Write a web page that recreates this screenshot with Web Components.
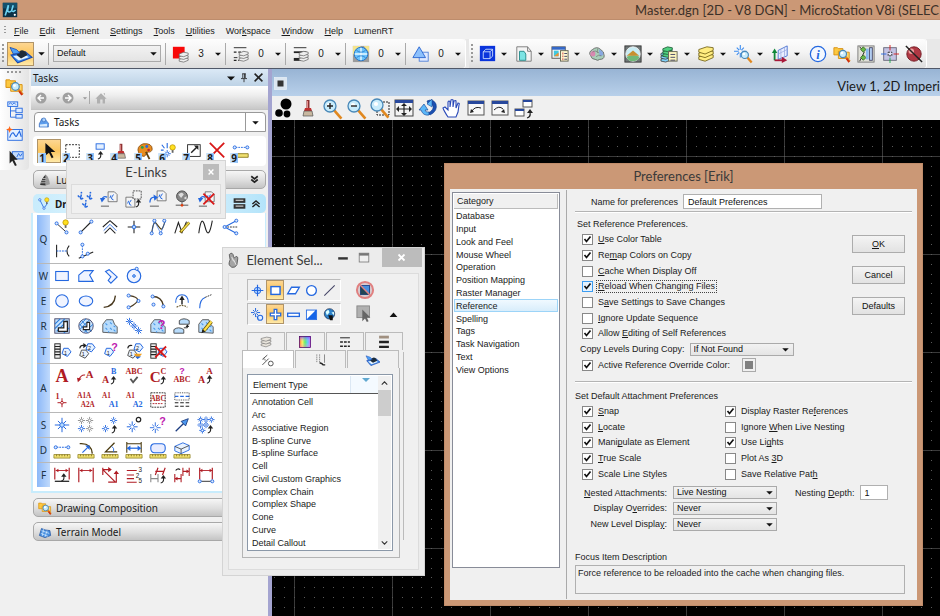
<!DOCTYPE html>
<html lang="en">
<head>
<meta charset="utf-8">
<title>MicroStation V8i</title>
<style>
html,body{height:100%}
body{margin:0;overflow:hidden;background:#f0f0f0;color:#1a1a1a;font:9px/12px "Liberation Sans",Arial,sans-serif}
</style>
</head>
<body>
<cad-app></cad-app>
<script>
/* ---------- icon drawing helpers (20 x 20 canvas) ---------- */
const B='#2468e0',K='#222',R='#b01c24',G='#8a8a8a';
const L=(c,d,w=1,x='')=>`<path d="${d}" fill="none" stroke="${c}" stroke-width="${w}" ${x}/>`;
const F=(c,d,s='none',w=1)=>`<path d="${d}" fill="${c}" stroke="${s}" stroke-width="${w}"/>`;
const C=(x,y,r,s,f='none',w=1)=>`<circle cx="${x}" cy="${y}" r="${r}" stroke="${s}" fill="${f}" stroke-width="${w}"/>`;
const Q=(x,y,w,h,s,f='none',k=1,e='')=>`<rect x="${x}" y="${y}" width="${w}" height="${h}" stroke="${s}" fill="${f}" stroke-width="${k}" ${e}/>`;
const T=(x,y,t,z,c,f='Liberation Serif')=>`<text x="${x}" y="${y}" font-family="${f},serif" font-weight="bold" font-size="${z}" fill="${c}" text-anchor="middle">${t}</text>`;
const star=(x,y,r,c=B,w=1)=>{let d='';for(let i=0;i<8;i++){const a=i*Math.PI/4,k=i%2?r*.8:r;d+=`M${x+Math.cos(a)*r*.25} ${y+Math.sin(a)*r*.25}L${x+Math.cos(a)*k} ${y+Math.sin(a)*k}`}return L(c,d,w)};
const stack=(x,y,c='#eee',s='#666')=>[6,3,0].map(k=>F(c,`M${x} ${y+k+2}l5-2 5 1v2l-5 2-5-1z`,s,.8)).join('');
const mag=(x,y,r=4)=>L('#e08820',`M${x+r*.6} ${y+r*.6}L${x+r*1.9} ${y+r*2.1}`,2.6)+C(x,y,r,'#4888b8','#c8ecfc',1.3)+C(x-1,y-1,r*.35,'none','#fff');
const folders=F('#fcc840','M1 3h4l1 1h5v7H1z','#d89010')+F('#ffd868','M6 7h4l1 1h7v7H6z','#d89010');
const hook=(x,y)=>L(K,`M${x} ${y+8}q4-1 3-6`,1.2)+F(K,`M${x} ${y+3}l3-4 3 4z`);
const bulb=(x,y)=>C(x,y,3,'#b89000','#ffe020',.8)+Q(x-1,y+3,2,3,'none','#666');
const brush=(x,y)=>L('#8c3030',`M${x} ${y-9}v8`,3)+L('#e89090',`M${x-.5} ${y-8}v7`)+F('#c03030',`M${x-3} ${y-1}h6l1 3h-8z`)+F('#c8b8a0',`M${x-4} ${y+2}h8l1 5h-10z`,'#555',.7);
const pencil=L('#6a5400','M7 16L16 5',4)+L('#ffe04a','M8 15L16 5',2.4)+F(K,'M5 18l1-4 3 2z');
const xdel=(x,y,r)=>L('#d81818',`M${x-r} ${y-r}L${x+r} ${y+r}M${x+r} ${y-r}L${x-r} ${y+r}`,2);
const node=(x,y)=>C(x,y,1.7,B,'#dcebff',1);
const ruler=F('#f0e070','M1 15h18v4H1z','#8c7c20',.8)+L('#6c5c10','M4 15v2M7 15v2M10 15v2M13 15v2M16 15v2',.8);
const hatch=(d)=>F('#b8dcfc',d,'#444',.9)+L('#4898e8','M5 7l2 2M10 6l2 2M5 12l2 2M10 12l2 2M14 14l2 2M8 16l1 1M14 10l2 1',1.2);
const blob='M2 17V8l4-5h7l2 5 3 3v7z';
const win=Q(2,3,16,14,'#555','#f8f8f8')+Q(2,3,16,3,'none','#28489c');
const docu=(x,y)=>F('#f4f4f4',`M${x} ${y}h7l3 3v8h-10z`,'#666',.9)+L(B,`M${x+6} ${y+3}l-2 3v2l2 1M${x+3} ${y+4}l-1 3`,1.1);
const dimA=(x,y,w)=>L(R,`M${x} ${y}H${x+w}`)+F(R,`M${x} ${y}l3-2v4zM${x+w} ${y}l-3-2v4z`);
const badge=(x,y,t,c=B)=>F('#e8f2ff',`M${x} ${y-5}h5l3 4-4 5-6-3z`,c,1.1)+`<text x="${x+2}" y="${y+2}" font-size="6" text-anchor="middle" font-family="Liberation Sans,sans-serif" fill="${K}">${t}</text>`;
const link=(x,y)=>C(x+1,y-6,1,'none',B)+L(B,`M${x-3} ${y-3}l2 2M${x+1} ${y-4}l-1 4q0 2 3 0`,1.6);
const glass=F('#3c8ef0','M1 11l13-3 6 5-13 5z','#1848b0')+F('#e8f4ff','M3 12l10-2 4 3-9 3z')+F('#1d2b3a','M6 11q4-7 8-3l2 3-6 3z')+F('#4ca0f8','M0 4l6 2 3 3-6 1z','#1848b0',.7);

const ICONS={
 logo:Q(1,1,18,18,'none','#0b3146')+Q(1,1,18,7,'none','#14506c')+L('#6fd4f4','M4 17L8 4M8 4L7 11q2 3 5 0l2-7M13 11q1 2 4-1',2)+C(16,16,1.4,'none','#fff'),
 glass,
 colorlev:Q(1,2,13,13,'none','#f80808')+stack(8,8),
 linestyle:L(K,'M2 3h14M2 14h4')+L(K,'M2 8h12M2 17h6',1.4,'stroke-dasharray="3 2"')+stack(8,7),
 weight:L(K,'M2 3h14')+L(K,'M2 8h14',2)+L(K,'M2 16h8',3.2)+stack(8,7),
 globe:Q(1,1,18,18,'none','#9c9c9c')+F('#f4e48c','M1 1h9L1 11zM19 1v7l-6-7z')+C(10,10,7.5,'#1c6cc4','#6cc4fc')+L('#e8f8ff','M10 3v14M3 10h14',1.6)+L('#1c6cc4','M5 6q5 4 10 0M5 14q5-4 10 0',.8),
 prio:Q(8,8,10,10,'#5080d8','#dfe9ff')+F('#8cc0fc','M8 2L1 14h14z','#2864d0'),
 cube:Q(1,1,18,18,'none','#0a34dc')+L('#d4e4ff','M5 8h8v8H5zM5 8l3-3h8v8l-3 3M13 8l3-3',1),
 page:F('#f4f4f4','M2 2h12l4 5v11H2z','#777')+F('#7ce4e4','M5 7h5l2 3v7H5z','#288')+L('#777','M14 2v5h4'),
 models:Q(1,3,14,12,'#555','#f6f6f6')+Q(1,3,14,3,'none','#3468c8')+Q(3,7,5,6,'none','#40c8e0')+F('#f09030','M3 13l5-4v4z')+Q(10,7,8,11,'#665','#fff8d0')+L('#c44','M12 10h1M12 13h1M12 16h1',2)+L('#446','M14 10h3M14 13h3M14 16h3'),
 brain:F('#a8d0b8','M3 12q-3-4 2-7 5-4 9 0 4 2 4 7 0 4-5 4-2 2-5 0-4 0-5-4z','#666')+F('#d888b0','M3 12q-2-4 3-6 3 2 2 5t-5 1z')+F('#88a8e0','M12 5q5 1 5 6l-4 2z')+L('#777','M5 8q4-3 6 1M9 13q3-3 6-1M11 4q-2 3 1 5',.8),
 raster:Q(1,1,18,18,'#333','#707878')+C(10,10,8,'#eee','#c8ecf4')+F('#70b878','M3 13q8-3 14 0 0 4-7 5-6 0-7-5z')+F('#c89030','M3 12l7-6 7 6z'),
 refs:stack(1,8,'#80d0f8','#333')+stack(3,3,'#50d080','#185030')+Q(9,8,9,10,'#665','#fff8c0')+L('#446','M11 11h5M11 14h5M11 17h5'),
 levels:[9,5,1].map(k=>F('#ffec80',`M2 ${k+4}l9-3 7 1v3l-9 4-7-2z`,'#6a5a10',.9)).join(''),
 snap:star(7,7,7,'#3c8cf0',1.2)+mag(12,11,4),
 axes:F('#e8eeff','M8 6l10-5v11L8 16z','#4870d0')+L('#98a8e0','M11 5v10M15 3v10M8 10l10-5',.8)+L('#108838','M4 17V8',2)+F('#108838','M1 9l3-5 3 5z')+L('#a81838','M4 17h9',2)+F('#a81838','M12 13l6 4-6 3z'),
 info:C(10,10,8.5,B,'#f4f8ff',1.4)+`<text x="10" y="15" font-size="14" font-style="italic" font-weight="bold" font-family="Liberation Serif,serif" text-anchor="middle" fill="${B}">i</text>`,
 foldermag:folders+mag(11,10,4)+L('#d03010','M15 15l3 4',2),
 toggles:Q(1,1,18,18,'#777','#e0e0d8')+L(K,'M3 2l5 6-5 10')+F('#68b848','M4 5l3-3 3 3-3 3zM4 14l3-3 3 3-3 3z','#285818',.8)+Q(10,4,3,12,'none','#88b8f0')+Q(14,3,3,14,'#446','#b8d4f8'),
 cross:Q(3,3,14,14,'#667','#c4c4e4')+L('#d81818','M10 0v6M20 10h-6')+L('#18a848','M10 14v6')+L(B,'M0 10h6')+Q(8,8,4,4,'#222','#e8e8fc',1,'stroke-dasharray="2 1"'),
 nosphere:C(10,10,8,'#701820','#b03844')+C(7,7,3,'none','#f0a0a0')+L(K,'M1 1l18 18',1.6),
 tree:Q(2,1,11,5,B,'#dcebff')+L(B,'M3 4l2-2 2 2 2-2 2 2M5 6v12h6M5 11h6')+Q(11,8,7,5,B,'#dcebff')+Q(11,15,7,4,B,'#dcebff'),
 curvenew:Q(2,5,16,12,B,'#e4f0ff')+L(B,'M4 14q3-8 5-4t3 2 3-5l2 6',1.3)+F('#ff6818','M4 1l1 3 3 1-3 1-1 3-1-3-3-1 3-1z'),
 pick:Q(7,3,12,8,B,'#c4dcfc')+L(B,'M12 9l2-4 2 3 2-3')+F(K,'M4 2v14l3-3 3 6 2-1-3-6h4z'),
 back:C(10,10,5.5,'none','#a0a0a0')+L('#fff','M13 10H7M10 7l-3 3 3 3',1.4),
 fwd:C(10,10,5.5,'none','#a0a0a0')+L('#fff','M7 10h6M10 7l3 3-3 3',1.4),
 home:F('#b0b0b0','M3 11l7-7 7 7h-2v6h-3v-5H9v5H5v-6zM13 4h2v3z'),
 taskbox:F('#5c9cec','M2 12l4-8 5 1 5 6v6L2 17z','#3468b8')+F('#d8ecff','M3 13l11-1v4H3z')+C(9,6,3,'#3468b8','#a8d0fc'),
 pin:L(K,'M7 3h6M8 3v7M12 3v7M11 3v7M5 11h10M10 11v6',1.4),
 wclose:L(K,'M4 4l12 12M16 4L4 16',2.4),
 arrow:F('#111','M6 1v14l4-3 3 6 2-1-3-6h5z'),
 fence:Q(2,3,15,14,K,'none',1.1,'stroke-dasharray="2 1.5"'),
 copyref:Q(9,2,9,6,B,'#e4f0ff')+hook(11,11),
 brush:brush(10,11),
 palette:F('#e88c20','M3 12q-3-7 5-10 10-1 10 6-1 4-5 3-2 4-4 5-4 0-6-4z','#8c5010')+C(7,6,1.6,'none','#28a048')+C(12,5,1.6,'none',B)+C(14,9,1.4,'none','#c02828')+L('#604010','M11 11l4 8',2),
 sparkbulb:L(B,'M2 3l3 4M8 1v6M4 9h-3',1.2)+bulb(14,6)+star(8,13,4,B),
 resize:Q(4,3,14,13,K)+L(K,'M8 12l7-7',1.6)+F(K,'M11 4h5v5z'),
 delx:xdel(10,9,8),
 measure:L(B,'M4 6h12',1,'stroke-dasharray="2 1"')+node(3,6)+node(17,6)+F('#f0e070','M5 13h13v4H5z','#8c7c20'),
 lumen:F('#333','M3 17Q5 8 11 2v16z')+F('#999','M11 2q5 4 6 14l-6 2z')+L('#eee','M5 11h6M4 14h7M7 8h4'),
 draw:L(B,'M4 4l6 12 5-7',1.2)+node(4,4)+node(10,16)+bulb(14,4),
 terrain:F('#4890e0','M2 15l3-10 5 2 7 1 1 7-8 3z','#1c50a0')+L('#d8ecff','M5 8l11 4M4 12l10 4M8 6l-2 10M13 8l-3 9'),
 chev:L(K,'M5 5l5 4 5-4M5 10l5 4 5-4',2.6),chevup:L(K,'M4 10l6-5 6 5M4 15l6-5 6 5',2.4),
 listb:Q(1,2,18,7,'none','#333')+Q(1,11,18,7,'none','#333')+L('#fff','M4 5h12M4 14h12',1.4),
 elinks:link(5,9)+link(15,9)+link(10,18),
 el2:docu(9,2)+L(B,'M2 11q1-5 6-3',1.4)+F(B,'M0 9h6l-4 5z')+L(G,'M1 18h9',1.6),
 el3:docu(1,8)+Q(9,1,9,9,'#444','#f4f4f4',1,'stroke-dasharray="2 1"')+hook(12,11),
 el4:docu(9,1)+L(B,'M1 14q0-6 5-6',1.4)+F(B,'M5 5l5 3-4 4z')+L(G,'M1 18h10',1.6),
 el5:C(10,7,6,'#444','#888')+F('#ddd','M6 5q4-4 6 0l-3 4zM12 9l3-2v4z')+L(G,'M10 13v3M3 17h14',1.6)+C(10,17,1.5,'none','#e04010'),
 el6:docu(8,2)+L(B,'M2 11q1-5 6-3',1.4)+F(B,'M0 9h6l-4 5z')+L(G,'M1 18h9',1.6)+xdel(12,10,6),
 q1:L(K,'M4 6l10 9')+node(4,6)+node(15,16)+bulb(14,5),
 q2:L(K,'M4 16L15 5',1.2)+node(4,16)+node(16,4),
 q3:L(K,'M2 10l8-7 8 7',1.2)+L(B,'M3 14l7-7 7 7')+L(K,'M4 17l6-6 6 6',1.2),
 q4:L(K,'M10 3v14M3 10h14',1.2)+C(10,10,2,B,'#b8d8ff'),
 q5:L('#4a3a10','M3 17Q5 2 8 6t5 6 5-9',1.2)+L(B,'M3 17L6 3l7 14 5-13',.7)+node(3,17)+node(6,3)+node(13,17)+node(17,3),
 q6:L(K,'M2 17L6 5l4 11 5-12',1.2)+L('#7a6000','M8 16l10-11',3)+L('#f4e050','M9 15l9-10',1.6),
 q7:L(K,'M2 17Q5-6 9 10t8-7',1.2),
 q8:L(B,'M17 3L4 10l13 7',1.2)+L(K,'M7 10h11',1,'stroke-dasharray="2 1"')+node(4,10)+node(17,3)+node(17,17),
 q9:L(K,'M4 3v14M18 4q-5 6 0 12',1.2)+L(B,'M4 10h11',1.2,'stroke-dasharray="2 1"'),
 q10:L(K,'M2 18L18 11',1.2)+L(B,'M6 4v12',1,'stroke-dasharray="2 1"')+node(6,3)+node(6,16)+node(12,13),
 w1:Q(3,5,14,10,B,'#f0f4ff',1.2),
 w2:F('#f0f4ff','M2 9l6-5h10l-4 5 4 7H2z',B,1.2),
 w3:F('#f0f4ff','M5 5l4-2 9 8-7 7-3-3 3-4-3-3z',B,1.2),
 w4:C(10,10,7.5,B,'#f0f4ff',1.3)+C(10,10,1.5,B,'#9cf')+node(13,2),
 e1:C(10,10,7,B,'#f0f4ff',1.2),
 e2:`<ellipse cx="10" cy="10" rx="7.5" ry="5.5" fill="#f0f4ff" stroke="${B}" stroke-width="1.2"/>`,
 e3:L('#4a3a20','M3 17Q15 16 16 4',1.5),
 e4:L('#4a3a20','M5 4q18 3 0 13',1.3)+node(4,4)+node(15,10)+node(4,17),
 e5:L('#4a3a20','M4 5q10 0 12 10',1.5)+node(4,5)+node(16,16)+node(5,14),
 e6:L(B,'M3 12q0-9 7-9t7 9',1.2)+L(K,'M10 7v7',1.6)+F(K,'M7 9l3-5 3 5z')+L('#6a5a30','M4 17q6-4 12 0',1.2,'stroke-dasharray="2 1"'),
 e7:L(B,'M3 18Q3 8 9 6',1.2)+L(K,'M9 6l7-3',1,'stroke-dasharray="2 1"'),
 r1:Q(2,2,16,16,'#446','#c8e4ff')+L('#2c7cd8','M2 8l6-6M2 13L13 2M4 16L16 4M12 18l6-6',1.3)+F('#fff','M12 5h4v11H6v-4h6z',K,1.4),
 r2:C(10,10,8,'#446','#c8e4ff')+L('#2c7cd8','M3 9l7-7M3 14L14 3M8 17l10-9M5 4l11 12M3 8l9 10',1.1)+F('#fff','M11 6h3v8H7v-3h4z',K,1.2),
 r3:hatch(blob),r4:star(5,5,4)+star(10,10,4)+star(15,15,4)+L(B,'M2 2l16 16'),
 r5:hatch(blob)+T(14,13,'?',14,'#c020b0','Liberation Sans'),
 r6:F('#b8dcfc','M7 8V4q5-4 11 0v4z','#444')+F('#b8dcfc','M1 18v-4q5-4 11 0v4z','#444')+L(K,'M12 12h4V9')+F(K,'M14 11l2-3 2 3z'),
 r7:hatch(blob)+pencil,
 t1:Q(2,2,6,16,K,'#eee')+L(K,'M2 5h6M2 8h6M2 11h6M2 14h6',1.3)+badge(12,12,'1'),
 t2:badge(12,7,'2')+badge(5,14,'1','#555')+L(K,'M3 7q1-4 5-3',1.2)+F(K,'M7 1l4 3-4 3z'),
 t3:badge(6,12,'1')+T(15,10,'?',12,'#c020b0','Liberation Sans'),
 t4:badge(12,7,'2')+badge(5,14,'1','#555')+F('#f0a020','M10 13h9l-5 6z')+F(B,'M11 16h7l-4 3z')+L(K,'M3 7q1-4 5-3',1.2),
 t5:Q(2,2,6,16,K,'#eee')+L(K,'M2 5h6M2 8h6M2 11h6M2 14h6',1.3)+badge(12,12,'1')+xdel(13,11,6),
 a1:T(10,17,'A',20,R),
 a2:T(14,12,'A',12,R)+L(R,'M2 14q3-6 7-5',1.2)+F(R,'M0 12l5 1-4 4z'),
 a3:T(5,18,'A',11,R)+T(14,8,'B',9,B)+hook(11,11),
 a4:T(10,8,'ABC',9,R)+L('#555','M6 13l3 4 5-6',2),
 a5:T(7,17,'C',17,R)+T(16,8,'C',9,R)+hook(13,11),
 a6:T(10,8,'?',10,'#c020b0','Liberation Sans')+T(10,17,'ABC',9,R),
 a7:T(5,18,'A',11,R)+T(14,8,'A',10,R)+hook(11,10),
 a8:T(5,9,'1',9,R)+L(R,'M10 8v10M5 13h10',1.1)+C(10,13,1.5,R,'#fff'),
 a9:T(8,8,'A1A',8,R)+T(12,18,'A2A',8,R),
 a10:T(6,8,'A1',8,R)+T(14,18,'A1',9,B),
 a11:T(6,8,'A1',8,R)+T(14,18,'A2',9,B),
 a12:Q(2,2,16,16,K,'none',1,'stroke-dasharray="2 1"')+T(10,11,'ABC',8,R)+L(R,'M4 14h12',1,'stroke-dasharray="2 1"'),
 a13:L(B,'M2 6h16',1.2,'stroke-dasharray="4 2"')+Q(2,2,16,8,K,'none',.9,'stroke-dasharray="1 1"')+L(K,'M2 13h16M2 17h16',1.2,'stroke-dasharray="4 2"'),
 s1:star(10,10,8,B,1.1)+C(10,10,2.5,B,'#b8dcff'),
 s2:star(5,5,4,G)+star(14,5,4,G)+star(5,14,4,B)+star(14,14,4,G),
 s3:star(14,5,4)+star(5,14,4)+hook(12,11),
 s4:star(8,12,6,B,1.1)+C(15,4,2.5,K,'#fff',1.3),
 s5:star(7,13,6)+T(15,10,'?',12,'#c020b0','Liberation Sans'),
 s6:L('#1c3c80','M3 17l9-9',1.4)+F('#4c98f0','M9 6l8-3-3 8z','#1c3c80'),
 s7:star(4,4,3.5)+star(10,4,3.5)+star(16,4,3.5)+star(4,10,3.5)+star(10,10,3.5)+star(6,16,3.5)+hook(12,11),
 d1:L(B,'M4 7h12',1.2,'stroke-dasharray="2 1"')+node(3,7)+node(17,7)+ruler,
 d2:L('#4a3a10','M3 3q13-1 14 11',1.5)+L(B,'M6 13l6-6',1.3)+F(B,'M9 5h5v5z')+ruler,
 d3:L('#4a3a10','M15 2L5 12h13',1.4)+L(B,'M12 6q3 2 2 6')+ruler,
 d4:L('#4a3a10','M2 1v12M18 1v12M2 3h16',1.2)+L(B,'M3 8h14',1.4)+F(B,'M2 8l4-3v6zM18 8l-4-3v6z')+ruler,
 d5:Q(2,3,16,10,B,'#e8ecff',1.2,'rx="4"')+ruler,
 d6:F('#e8f2ff','M2 6l9-4 7 3v5l-9 4-7-3z',B)+L(K,'M2 6l7 3 9-4M9 9v5',.8)+ruler,
 f1:L(R,'M2 2v13M18 2v13',1.3)+dimA(3,5,14)+hook(9,9)+L(K,'M2 17h16',1.4),
 f2:L(R,'M2 2v16M18 2v16',1.3)+dimA(3,5,14),
 f3:L(R,'M2 2v8M2 4h9M2 4l14 14M17 8v10h-9',1.3)+F(R,'M8 1l4 3-4 3zM14 9l3-4 3 4z'),
 f4:L(R,'M2 5h11M2 10h8M2 14h8M2 18h11',1.2)+`<g font-family="Liberation Sans,sans-serif" font-size="7" fill="${K}"><text x="15" y="7">3</text><text x="12" y="13">2</text><text x="15" y="19">5</text></g>`,
 f5:L(G,'M2 9v9M10 9v9M2 14h8',1.2)+L(R,'M7 6h10M10 2l-3 8M18 2l-3 8',1.3)+hook(13,11),
 f6:L(R,'M2 9v9M9 9v9M11 2v9M18 2v9M2 14h7M11 6h7',1.2)+L(K,'M3 5q2-3 5-1',1.2)+F(R,'M2 14l3-2v4zM18 6l-3-2v4z'),
 f7:L(R,'M3 2v13M17 2v13',1.3)+dimA(3,5,14)+L(K,'M4 17h12')+node(3,17)+node(17,17),
 blobs:C(12,6,5.5,'none','#000')+C(5,15,3.8,'none','#000')+C(13,16,3.4,'none','#000'),
 zin:mag(8,8,6)+L(K,'M8 5v6M5 8h6',1.4),zout:mag(8,8,6)+L(K,'M5 8h6',1.4),
 zarea:Q(7,4,12,13,K,'none',1,'stroke-dasharray="2 1"')+mag(7,7,6),
 fit:Q(1,2,18,16,'#444','#f4f4f4')+Q(1,2,18,3,'none','#28489c')+L(K,'M10 6v11M3 11h14',1.2)+F(K,'M10 5l-3 3h6zM10 18l-3-3h6zM2 11l3-3v6zM18 11l-3-3v6z'),
 rotate:F('#1c50b0','M9 3q6-3 9 3 2 7-6 11l-2-2q6-3 5-7-2-3-5-2z','#0c3c90',.6)+F('#5cb8f8','M11 17q-6 1-8-5H1l5-6 4 6H7q1 3 4 2z','#0c3c90',.6)+F('#5cb8f8','M9 6l5-5v8z','#0c3c90',.5),
 hand:F('#fff','M6 19q-4-6-5-9l2-1 3 3V4q1-2 2 0v5l1-7q1-1 2 0v7l1-6q2-1 2 0v7l2-5q2 0 1 2l-1 7-2 5z','#2848b8',1.1),
 prev:win+L(K,'M6 13q3-5 9-3')+F(K,'M4 15l1-4 3 3z'),
 next:win+L(K,'M4 12q5-5 9-1')+F(K,'M15 15l-1-4-3 3z'),
 vcopy:Q(9,2,9,7,'#555','#fff')+Q(9,2,9,2,'none','#28489c')+Q(1,11,9,7,'#555','#fff')+Q(1,11,9,2,'none','#28489c')+hook(13,12),
 doc:Q(2,2,16,16,'#e8f0f8','#dce6f0')+Q(6,6,8,8,'none','#333'),
 wrench:F('#a4a4a4','M5 3q4-4 5 2l1 2q4-4 4 1l-1 7q-2 4-6 3-5-3-3-6l1-3z','#555')+L('#eee','M8 6l2 5M10 9l3 6'),
 p1:C(10,10,5,B,'#b8d8ff',1.4)+L(B,'M10 1v18M1 10h18',1.8),p2:Q(3,4,14,12,B,'#fff',2.2),
 p3:F('#fff','M7 5h12l-6 10H1z',B,2),p4:C(10,10,7.5,B,'#fff',2),p5:L('#446','M2 18L18 2',1.6),
 p6:star(7,7,7,B,1.5)+C(14,15,4,B,'#e4f0ff',1.6)+L(B,'M8 13l4 3'),
 p7:F('#fff','M8 2h4v6h6v4h-6v6H8v-6H2V8h6z',B,2),p8:Q(1,8,18,5,B,'#fff',2),
 p9:Q(2,3,16,15,B,'#1464e8')+F('#fff','M3 4h13L3 17z'),
 p10:C(10,9,8,'#124','#2c80c8')+F('#dff','M4 6q5-6 6 1l-4 4zM13 7l4-1v5z')+F('#111','M8 11h7v8h-4z'),
 no:C(10,10,9,'#e08080','#d8ccd0',2.2)+Q(5,5,10,10,'#248','#4890e0')+F('#245','M5 5l10 10H5z')+L('#e08080','M4 4l12 12',1.6),
 gcur:Q(1,1,14,13,'#888','#b0b0b0')+F('#666','M7 5v13l3-3 2 4 2-1-2-4h4z'),
 tl:[10,6,2].map(k=>F('#e8e4dc',`M3 ${k+3}l8-2 6 1v2l-7 3-7-2z`,'#666',.8)).join(''),
 hue:`<defs><linearGradient id="h"><stop offset="0" stop-color="#f40"/><stop offset=".25" stop-color="#fe3"/><stop offset=".5" stop-color="#3e4"/><stop offset=".75" stop-color="#3bf"/><stop offset="1" stop-color="#d3f"/></linearGradient><linearGradient id="v" x2="0" y2="1"><stop offset="0" stop-color="#74f" stop-opacity=".8"/><stop offset=".5" stop-color="#fff" stop-opacity=".2"/><stop offset="1" stop-color="#f8c" stop-opacity=".6"/></linearGradient></defs><rect x="2" y="2" width="16" height="16" fill="url(#h)"/><rect x="2" y="2" width="16" height="16" fill="url(#v)" stroke="#406"/>`,
 tdash:L(K,'M3 4h14',1.4)+L(K,'M3 10h14M3 16h14',2,'stroke-dasharray="4 1.5"'),
 tthick:Q(3,1,14,4,'none','#a09080')+L(K,'M3 10h14M3 17h14',3.4),
 telem:L('#555','M2 9l7-6M2 17l9-9',1.4)+L('#555','M3 9q3-2 3 2')+C(14,15,3.4,'#555','#fff',1.4),
 tu:L(G,'M4 2v11M8 2v11',1.4,'stroke-dasharray="2 1"')+L(G,'M15 2v12',1.4)+L(K,'M8 14q4 1 5 3h3',2),
 caret:F('#111','M5 8h10l-5 5z'),caretS:F('#999','M7 9h6l-3 3z'),tri:F('#111','M4 14h12l-6-7z'),
 min:Q(4,9,12,3,'none','#333'),max:Q(4,4,12,11,'#777','#f0f0f0')+Q(4,4,12,3,'none','#777'),
 cx:L('#fff','M6 6l8 8M14 6l-8 8',2.4),sup:L('#333','M5 12l5-5 5 5',2),sdn:L('#333','M5 8l5 5 5-5',2)
};

const def=(name,html)=>customElements.define(name,class extends HTMLElement{
  connectedCallback(){
    if(this.shadowRoot)return;
    this.attachShadow({mode:'open'}).innerHTML=typeof html==='function'?html(this):html;
  }});
const a=(e,n,d='')=>e.getAttribute(n)??d;
const btnReset='button{appearance:none;border:0;background:none;padding:0;margin:0;font:inherit;color:inherit;display:grid;place-items:center}';

def('ui-icon',e=>`<style>:host{display:inline-grid;place-items:center}svg{display:block;overflow:visible}</style>
<svg width="${a(e,'size',18)}" height="${a(e,'size',18)}" viewBox="0 0 20 20" aria-hidden="true">${ICONS[a(e,'name')]||''}</svg>`);

/* icon button; its cell size comes from --w and --h */
def('tool-button',e=>`<style>:host{display:block;position:relative;width:var(--w,24px);height:var(--h,24px)}${btnReset}
button{width:100%;height:100%;box-sizing:border-box}
:host([active]) button{background:linear-gradient(#fdd692,#fbc65e 50%,#ffe9a8);border:1px solid #b09468}
span{position:absolute;left:1px;bottom:0;width:8px;height:10px;background:linear-gradient(90deg,#d4e8fc,#8cc0f8);font:bold 10px/11px "Noto Sans",sans-serif;text-align:center}
</style><button aria-label="${a(e,'label',a(e,'icon'))}"><ui-icon name="${a(e,'icon')}" size="${a(e,'size',18)}"></ui-icon></button>${e.hasAttribute('key')?`<span>${a(e,'key')}</span>`:''}`);

def('tool-combo',e=>`<style>:host{display:flex;align-items:center;flex:var(--f,none)}${btnReset}
ui-icon{width:20px}b{font:10px/12px "Liberation Sans",sans-serif;width:${e.hasAttribute('value')?24:0}px;text-align:center}.c{width:14px;height:20px}.c ui-icon{width:14px}
:host([sep]){border-left:1px solid #aaa;padding-left:5px;height:22px}</style>
<button aria-label="${a(e,'icon')}"><ui-icon name="${a(e,'icon')}" size="${a(e,'size',18)}"></ui-icon></button><b>${a(e,'value')}</b><button class="c" aria-label="${a(e,'icon')} options"><ui-icon name="caret" size="12"></ui-icon></button>`);

def('app-title',`<style>:host{display:flex;align-items:center;justify-content:space-between;height:20px;padding:0 1px 0 2px;background:#cb9876;box-shadow:inset 0 -1px #bd8c6c;font:13px/18px Lato,sans-serif;color:#3c3028;white-space:nowrap}</style>
<ui-icon name="logo" size="16"></ui-icon><slot></slot>`);

def('app-menu',`<style>:host{display:flex;align-items:center;gap:1px;height:19px;padding-left:4px;background:#f0f0f0;font-size:9px}${btnReset}
button{padding:0 5px;height:18px;line-height:20px;display:block}i{width:2px;height:8px;margin-right:2px;background:repeating-linear-gradient(#999 0 1px,transparent 1px 3px)}</style><i></i>
<button><u>F</u>ile</button><button><u>E</u>dit</button><button>E<u>l</u>ement</button><button><u>S</u>ettings</button><button><u>T</u>ools</button><button><u>U</u>tilities</button><button>Wor<u>k</u>space</button><button><u>W</u>indow</button><button><u>H</u>elp</button><button>LumenRT</button>`);

def('ui-select',e=>`<style>:host{display:inline-grid;align-items:center}select,ui-icon{grid-area:1/1}
select{appearance:none;width:100%;height:var(--sh,13px);box-sizing:border-box;border:1px solid #aaa;border-radius:0;background:linear-gradient(#f2f2f2,#e4e4e4);font:9px/11px "Liberation Sans",sans-serif;color:#111;padding:0 3px;margin:0;outline:0}
ui-icon{justify-self:end;width:16px;pointer-events:none}</style>
<select aria-label="${a(e,'label')}"><option>${a(e,'value')}</option></select><ui-icon name="caret" size="13"></ui-icon>`);

const combos=[['page',18],['models',19],['brain',18],['raster',18],['refs',19],['levels',18],['snap',18],['axes',18]];
def('app-toolbars',`<style>:host{display:flex;gap:4px;height:29px;background:#e8e8e8;border-bottom:1px solid #505868;padding-right:14px}
.bar{display:flex;align-items:center;background:linear-gradient(#fdfdfd,#f4f4f4 45%,#dcdcdc);border-radius:0 3px 3px 0;box-shadow:1px 0 #fff}
.grip{width:2px;height:20px;margin:0 3px 0 2px;background:repeating-linear-gradient(#999 0 2px,transparent 2px 4px)}
.act{--w:27px;--h:24px}.second{flex:1}.second .grip{margin-right:4px}.tail{--w:24px;display:flex}
${btnReset}.c{width:14px;height:20px}
ui-select{width:108px;--sh:17px;margin:0 4px}.s{width:1px;height:22px;background:#aaa}.first tool-combo{width:60px;box-sizing:border-box}
</style>
<div class="bar first"><i class="grip"></i><tool-button class="act" icon="glass" size="22" active></tool-button><button class="c" aria-label="Templates"><ui-icon name="caret" size="13"></ui-icon></button><i class="s"></i>
<ui-select label="Active level" value="Default"></ui-select>
<tool-combo sep icon="colorlev" value="3"></tool-combo><tool-combo sep icon="linestyle" value="0"></tool-combo><tool-combo sep icon="weight" value="0"></tool-combo><tool-combo sep icon="globe" value="0"></tool-combo><tool-combo sep icon="prio" value="0"></tool-combo></div>
<div class="bar second"><i class="grip"></i><tool-combo style="--f:1" icon="cube" size="17"></tool-combo>${combos.map(c=>`<tool-combo style="--f:1" icon="${c[0]}" size="${c[1]}"></tool-combo>`).join('')}
<div class="tail">${['info','foldermag','toggles','cross','nosphere'].map(n=>`<tool-button icon="${n}"></tool-button>`).join('')}</div></div>`);

def('side-dock',`<style>:host{display:block;width:31px;background:#f0f0f0}
div{width:29px;height:101px;background:linear-gradient(90deg,#fff,#e4e4e4);border-radius:0 0 4px 0;display:flex;flex-direction:column;align-items:center;--w:29px;--h:24px}
i{width:16px;height:2px;margin:2px 0 1px;background:repeating-linear-gradient(90deg,#999 0 2px,transparent 2px 4px)}</style>
<div><i></i><tool-button icon="foldermag" size="19"></tool-button><tool-button icon="tree"></tool-button><tool-button icon="curvenew"></tool-button><tool-button icon="pick"></tool-button></div>`);

def('task-row',e=>`<style>:host{display:flex;border-bottom:1px solid #b8b8b8;min-height:24px}
span{width:13px;display:grid;place-items:center;background:linear-gradient(90deg,#8cb8f8,#c0dafc);font:10px/14px "Noto Sans",sans-serif;color:#234}
div{flex:1;display:grid;grid-template-columns:repeat(8,24px);grid-auto-rows:24px}</style>
<span>${a(e,'key')}</span><div>${a(e,'icons').split(' ').map(n=>n==='-'?'<i></i>':`<tool-button icon="${n}"></tool-button>`).join('')}</div>`);

def('task-bar',e=>`<style>:host{display:block;height:19px;box-sizing:border-box;border:1px solid #a8a8a8;border-radius:5px;background:linear-gradient(#f6f6f6,#dedede 55%,#c4c4c4)}
${btnReset}button{width:100%;height:100%;display:flex;align-items:center;padding:0 4px;gap:4px;font:10px/14px "Noto Sans",sans-serif;font-weight:${a(e,'weight','normal')}}
b{flex:1;text-align:left;font-weight:inherit}:host([open]){border:0;background:linear-gradient(90deg,#c8ecfc,#eaf8ff 50%,#b4e4fa)}</style>
<button><ui-icon name="${a(e,'icon')}" size="14"></ui-icon><b>${a(e,'text')}</b>${e.hasAttribute('open')?'<ui-icon name="listb" size="13"></ui-icon><ui-icon name="chevup" size="12"></ui-icon>':'<ui-icon name="chev" size="13"></ui-icon>'}</button>`);

def('task-pane',`<style>:host{display:flex;flex-direction:column;width:237px;background:#f0f0f0;border-right:4px solid #a4a4d0}
${btnReset}
header{display:flex;align-items:center;height:17px;padding:0 3px 0 2px;background:linear-gradient(#dbe9f6,#bed3e6);font:10px/14px "Noto Sans",sans-serif}header b{flex:1;font-weight:normal}header button{width:14px;height:16px}
nav{display:flex;align-items:center;height:23px;background:linear-gradient(#fff,#eee 40%,#c8c8c8);border-bottom:1px solid #c4c4c4}nav .d{width:7px}nav i{width:1px;height:13px;margin:0 3px 0 4px;background:#aaa}
.pick{display:flex;align-items:center;height:20px;margin:2px 2px 0 3px;background:#fff;border:1px solid #999;border-radius:4px 4px 0 0;font:10px/14px "Noto Sans",sans-serif;box-sizing:border-box}.pick ui-icon{width:18px}.pick button:last-child{margin-left:auto;border-left:1px solid #999;width:20px;height:18px}
.pick .n{display:flex;gap:1px}
.keys{display:flex;margin:4px 2px 0;padding:3px 4px;height:24px;background:#fff;border-radius:4px}
.body{margin:0 2px 5px 0;padding:2px 0 4px 4px;background:#fff;border:solid #c8ecfc;border-width:0 1px 2px 2px}
task-bar{margin:0 2px}task-bar.l{margin-top:4px}task-bar.o{margin-top:5px}task-bar.t{margin-top:5px}
task-row:last-child{border:0}</style>
<header><b>Tasks</b><button aria-label="Menu"><ui-icon name="caret" size="16"></ui-icon></button><button aria-label="Pin"><ui-icon name="pin" size="12"></ui-icon></button><button aria-label="Close"><ui-icon name="wclose" size="13"></ui-icon></button></header>
<nav><button aria-label="Back"><ui-icon name="back" size="20"></ui-icon></button><button class="d" aria-label="Back list"><ui-icon name="caretS" size="14"></ui-icon></button><button aria-label="Forward"><ui-icon name="fwd" size="20"></ui-icon></button><button class="d" aria-label="Forward list"><ui-icon name="caretS" size="14"></ui-icon></button><i></i><button aria-label="Home"><ui-icon name="home" size="16"></ui-icon></button></nav>
<div class="pick"><button class="n"><ui-icon name="taskbox" size="13"></ui-icon>Tasks</button><button aria-label="Choose task"><ui-icon name="caret" size="13"></ui-icon></button></div>
<div class="keys">${['arrow','fence','copyref','brush','palette','sparkbulb','resize','delx','measure'].map((n,i)=>`<tool-button icon="${n}" key="${i+1}" ${i?'':'active'}></tool-button>`).join('')}</div>
<task-bar class="l" icon="lumen" text="Lu"></task-bar>
<task-bar class="o" icon="draw" text="Dr" weight="bold" open></task-bar>
<div class="body">
<task-row key="Q" icons="q1 q2 q3 q4 q5 q6 q7 q8 q9 q10"></task-row><task-row key="W" icons="w1 w2 w3 w4"></task-row><task-row key="E" icons="e1 e2 e3 e4 e5 e6 e7"></task-row><task-row key="R" icons="r1 r2 r3 r4 r5 r6 r7"></task-row><task-row key="T" icons="t1 t2 t3 t4 t5"></task-row><task-row key="A" icons="a1 a2 a3 a4 a5 a6 a7 - a8 a9 a10 a11 a12 a13"></task-row><task-row key="S" icons="s1 s2 s3 s4 s5 s6 s7"></task-row><task-row key="D" icons="d1 d2 d3 d4 d5 d6"></task-row><task-row key="F" icons="f1 f2 f3 f4 f5 f6 f7"></task-row></div>
<task-bar icon="foldermag" text="Drawing Composition"></task-bar><task-bar class="t" icon="terrain" text="Terrain Model"></task-bar>`);

let dots='';for(let x=0;x<10;x++)for(let y=0;y<10;y++)dots+=`<rect x="${Math.round(x*9.8)}" y="${Math.round(y*9.8)}" width="1" height="1"/>`;
def('drawing-view',`<style>:host{display:flex;flex-direction:column;flex:1;min-width:0}
header{display:flex;justify-content:space-between;align-items:flex-start;height:27px;padding:0 0 0 1px;background:linear-gradient(#98b4d4,#b8d0ea);font:13px/18px Lato,sans-serif;white-space:nowrap;box-sizing:border-box}
header ui-icon{margin-top:7px}header span{margin-top:8px}
nav{display:flex;height:24px;background:#f0f0f0}
svg{flex:1;width:100%;min-height:0;background:#000;display:block}</style>
<header><ui-icon name="doc" size="15"></ui-icon><span>View 1, 2D Imperi</span></header>
<nav>${['blobs','brush','zin','zout','zarea','fit','rotate','hand','prev','next','vcopy'].map(n=>`<tool-button icon="${n}" size="20"></tool-button>`).join('')}</nav>
<svg aria-hidden="true"><defs><pattern id="g" x="22" y="36" width="98" height="98" patternUnits="userSpaceOnUse"><rect width="1" height="98" fill="#3a3a3a"/><rect width="98" height="1" fill="#3a3a3a"/><g fill="#5a5a5a">${dots}</g></pattern></defs><rect width="100%" height="100%" fill="url(#g)"/></svg>`);

/* floating window: slots for its lead icon, controls and content */
def('float-window',e=>`<style>:host{position:absolute;display:block;box-sizing:border-box;background:var(--frame,#ececec);box-shadow:inset 0 0 0 1px var(--edge,#d4d4d4);padding:0 var(--pad,6px) var(--pad,6px)}
header{display:flex;align-items:center;justify-content:center;height:var(--bar,26px);font:13px/18px Lato,sans-serif;color:#3a3a3a;white-space:nowrap}
section{background:#f0f0f0;border:1px solid var(--line,#dcdcdc)}</style>
<header><slot name="lead"></slot><span>${a(e,'caption')}</span><slot name="controls"></slot></header><section><slot></slot></section>`);

def('e-links',`<style>:host{display:block}float-window{left:66px;top:160px;width:160px;--pad:5px;--bar:24px}${btnReset}
.x{position:absolute;right:7px;top:4px;width:16px;height:16px;background:#bcbcbc}div{display:flex;padding:2px 1px;--w:24px;justify-content:space-around}</style>
<float-window caption="E-Links"><button class="x" slot="controls" aria-label="Close"><ui-icon name="cx" size="12"></ui-icon></button>
<div>${['elinks','el2','el3','el4','el5','el6'].map(n=>`<tool-button icon="${n}"></tool-button>`).join('')}</div></float-window>`);

const types=['Annotation Cell','Arc','Associative Region','B-spline Curve','B-spline Surface','Cell','Civil Custom Graphics','Complex Chain','Complex Shape','Cone','Curve','Detail Callout'];
def('element-selection',`<style>:host{display:block}float-window{left:222px;top:247px;width:203px}${btnReset}
.lead{display:contents}.lead ui-icon{margin-right:4px}
.ctl{display:flex;align-items:flex-start;height:24px;margin:0 0 0 10px}.ctl button{width:22px;height:20px;margin-left:-1px}.ctl button:last-child{width:40px;height:19px;background:#bcbcbc;margin-left:7px}
.in{padding:5px 18px 11px 13px}
.tools{display:grid;grid-template-columns:94px 1fr;gap:2px 8px;padding-left:5px;margin-right:-7px}
.g{display:flex;--w:18px;--h:20px;height:20px;border:1px solid #bbb;border-right-color:#fff;border-bottom-color:#fff}
.o{display:flex;align-items:center;justify-content:space-between;padding:0 7px}
.tabs{display:flex;position:relative}.tabs button{flex:1;height:18px;border:1px solid #bbb;border-bottom:0;background:#f0f0f0;margin-right:1px}
.back{margin:7px -4px 0 5px}.front button:first-child{background:#fff}
.pane{border:1px solid #b4b4b4;border-top:0;padding:6px 6px 6px 4px;box-shadow:4px -17px 0 -1px #f0f0f0,5px -17px 0 -1px #bbb;background:#f0f0f0}
.list{display:grid;grid-template-columns:1fr 13px;border:1px solid #8b98a8;background:#fff;padding:1px}
.h{margin-left:1px;height:17px;display:flex;align-items:center;padding-left:3px;border-bottom:1px solid #555;background:linear-gradient(90deg,#fff 100px,#dce8f4 100px 101px,#f4faff 101px)}
.h span{flex:1}.h i{align-self:start;margin:2px 8px;border:solid transparent;border-width:4px 4px 0;border-top-color:#60a8d0}
ul{list-style:none;margin:0;padding:2px 0 0 3px;height:153px;display:grid;grid-auto-rows:1fr;align-items:center}
.sb{grid-area:1/2/3/3;background:#f0f0f0;display:flex;flex-direction:column;justify-content:space-between}.sb button{height:14px}.sb i{height:26px;background:#cdcdcd;margin-bottom:auto}</style>
<float-window caption="Element Sel..."><span slot="lead" class="lead"><ui-icon name="wrench" size="17"></ui-icon></span>
<div slot="controls" class="ctl"><button aria-label="Minimize"><ui-icon name="min" size="16"></ui-icon></button><button aria-label="Maximize"><ui-icon name="max" size="16"></ui-icon></button><button aria-label="Close"><ui-icon name="cx" size="15"></ui-icon></button></div>
<div class="in"><div class="tools"><div class="g">${['p1','p2','p3','p4','p5'].map((n,i)=>`<tool-button icon="${n}" size="13" ${i===1?'active':''}></tool-button>`).join('')}</div><div class="o"><ui-icon name="no" size="18"></ui-icon></div>
<div class="g">${['p6','p7','p8','p9','p10'].map((n,i)=>`<tool-button icon="${n}" size="13" ${i===1?'active':''}></tool-button>`).join('')}</div><div class="o"><ui-icon name="gcur" size="18"></ui-icon><ui-icon name="tri" size="13"></ui-icon></div></div>
<div class="tabs back">${['tl','hue','tdash','tthick'].map(n=>`<button aria-label="${n}"><ui-icon name="${n}" size="14"></ui-icon></button>`).join('')}</div>
<div class="tabs front">${['telem','tu','glass'].map(n=>`<button aria-label="${n}"><ui-icon name="${n}" size="14"></ui-icon></button>`).join('')}</div>
<div class="pane"><div class="list"><div class="h"><span>Element Type</span><i></i></div><div class="sb"><button aria-label="Up"><ui-icon name="sup" size="11"></ui-icon></button><i></i><button aria-label="Down"><ui-icon name="sdn" size="11"></ui-icon></button></div><ul>${types.map(t=>`<li>${t}</li>`).join('')}</ul></div></div></div></float-window>`);

def('ui-check',e=>`<style>:host{display:flex;align-items:center}label{display:flex;align-items:center;gap:3px;white-space:nowrap}
input{appearance:none;width:11px;height:11px;margin:0;border:1px solid #888;background:#fff;box-sizing:border-box}
input:checked{background:#fff url("data:image/svg+xml,%3Csvg xmlns='http://www.w3.org/2000/svg' viewBox='0 0 18 18'%3E%3Cpath d='M3 8l4 5 8-10' fill='none' stroke='%23111' stroke-width='3.4'/%3E%3C/svg%3E") center/9px}
:host([focus]) input{border-color:#3c9cf0;background-color:#e4f2ff}span{padding:0 1px;border:1px solid transparent;line-height:11px}:host([focus]) span{border:1px dotted #444}</style>
<label><input type="checkbox" ${e.hasAttribute('on')?'checked':''}><span><slot></slot></span></label>`);

const cats=['Database','Input','Look and Feel','Mouse Wheel','Operation','Position Mapping','Raster Manager','Reference','Spelling','Tags','Task Navigation','Text','View Options'];
def('preferences-dialog',`<style>:host{display:block}float-window{left:444px;top:163px;width:479px;--frame:#cb9876;--edge:#c08c6a;--line:#f0f0f0;--bar:26px}
.cols{display:grid;grid-template-columns:116px 1fr}
aside{padding:2px 6px 31px 1px;border-right:1px solid #aaa}
.list{height:100%;box-sizing:border-box;border:1px solid #888c98;background:#fff}
.list b{display:block;font-weight:normal;height:14px;line-height:15px;margin:1px 1px 0;padding-left:3px;background:#f0f0f0;border:solid #bbb;border-width:0 1px 1px 0}
ul{list-style:none;margin:0;padding:1px 1px 0;height:166px;display:grid;grid-auto-rows:1fr}li{padding-left:1px;display:flex;align-items:center;line-height:10px;border:1px solid transparent;box-sizing:border-box}
li.sel{border-color:#9cd4f8;background:linear-gradient(#f0f9ff,#d8edfb)}
main{padding:4px 4px 5px 8px;min-width:0}
.name{display:flex;align-items:center;gap:5px;padding-left:16px}
input{height:15px;box-sizing:border-box;border:1px solid #b0b0b0;background:#fff;font:9px/12px "Liberation Sans",sans-serif;padding:0 4px;margin:0;color:#111}.name input{width:139px}
hr{height:1px;border:0;border-top:1px solid #b4b4b4;background:#fff;margin:2px 0 0}
hr.low{margin-top:8px}
h3{font:inherit;margin:5px 0 2px 2px}
h3.att-h{margin:7px 0 2px}h3.foc{margin:19px 0 2px}
.ref{display:flex;justify-content:space-between}.opts{display:grid;grid-template-rows:repeat(9,1fr);height:141px;padding-left:7px;align-items:center}
.row{display:flex;align-items:center;gap:5px}.row ui-select{width:104px}.lv{margin-left:-2px}
.sw{width:14px;height:14px;box-sizing:border-box;border:1px solid #aaa;background:#808080;box-shadow:inset 0 0 0 2px #f0f0f0;padding:0;margin-left:5px}
.btns{display:flex;flex-direction:column;gap:13px;padding:3px 7px 0 0}.btns button{width:53px;height:18px;border:1px solid #acacac;background:linear-gradient(#f4f4f4,#e2e2e2);font:9px/12px "Liberation Sans",sans-serif;color:#111;padding:0}
.att{display:grid;grid-template:repeat(5,1fr)/143px 1fr;grid-auto-flow:column;height:78px;padding-left:7px;margin-bottom:3px}
.nest{display:grid;grid-template:repeat(3,1fr)/92px 104px 1fr;height:47px;gap:0 6px;align-items:center}.nest>label{text-align:right}.nest ui-select{width:104px}
.dep{display:flex;align-items:center;gap:5px;margin-left:12px}.dep input{width:28px}
.desc{border:1px solid #b0b0b0;height:25px;margin-right:7px;padding:1px 2px;line-height:13px}</style>
<float-window caption="Preferences [Erik]"><div class="cols"><aside><div class="list"><b>Category</b><ul>${cats.map(c=>`<li${c==='Reference'?' class="sel"':''}>${c}</li>`).join('')}</ul></div></aside>
<main><div class="name"><label for="pn">Name for preferences</label><input id="pn" value="Default Preferences"></div><hr>
<h3>Set Reference Preferences.</h3>
<div class="ref"><div class="opts"><ui-check on><u>U</u>se Color Table</ui-check><ui-check on>Re<u>m</u>ap Colors on Copy</ui-check><ui-check><u>C</u>ache When Display Off</ui-check><ui-check on focus><u>R</u>eload When Changing Files</ui-check><ui-check>S<u>a</u>ve Settings to Save Changes</ui-check><ui-check><u>I</u>gnore Update Sequence</ui-check><ui-check on>Allow <u>E</u>diting of Self References</ui-check>
<div class="row lv"><span>Copy Levels During Copy:</span><ui-select label="Copy Levels During Copy" value="If Not Found"></ui-select></div><div class="row"><ui-check on>Active Reference Override Color:</ui-check><button class="sw" aria-label="Override color"></button></div></div>
<div class="btns"><button><u>O</u>K</button><button>Cancel</button><button>Defaults</button></div></div>
<hr class="low"><h3 class="att-h">Set Default Attachment Preferences</h3>
<div class="att"><ui-check on><u>S</u>nap</ui-check><ui-check on><u>L</u>ocate</ui-check><ui-check on>Mani<u>p</u>ulate as Element</ui-check><ui-check on><u>T</u>rue Scale</ui-check><ui-check on>Scale Line Styles</ui-check><ui-check on>Display Raster Re<u>f</u>erences</ui-check><ui-check>Ignore <u>W</u>hen Live Nesting</ui-check><ui-check on>Use Li<u>g</u>hts</ui-check><ui-check>Plot As <u>3</u>D</ui-check><ui-check>Save Relative Pat<u>h</u></ui-check></div>
<div class="nest"><label><u>N</u>ested Attachments:</label><ui-select label="Nested Attachments" value="Live Nesting"></ui-select><div class="dep"><label for="nd">Nesting <u>D</u>epth:</label><input id="nd" value="1"></div>
<label>Display O<u>v</u>errides:</label><ui-select label="Display Overrides" value="Never"></ui-select><i></i><label>New Level Displa<u>y</u>:</label><ui-select label="New Level Display" value="Never"></ui-select></div>
<h3 class="foc">Focus Item Description</h3><div class="desc">Force reference to be reloaded into the cache when changing files.</div></main></div></float-window>`);

def('cad-app',`<style>:host{position:relative;display:flex;flex-direction:column;height:100vh;overflow:hidden}.work{flex:1;display:flex;min-height:0}</style>
<app-title>Master.dgn [2D - V8 DGN] - MicroStation V8i (SELEC</app-title><app-menu></app-menu><app-toolbars></app-toolbars>
<div class="work"><side-dock></side-dock><task-pane></task-pane><drawing-view></drawing-view></div>
<e-links></e-links><element-selection></element-selection><preferences-dialog></preferences-dialog>`);
</script>
</body>
</html>
